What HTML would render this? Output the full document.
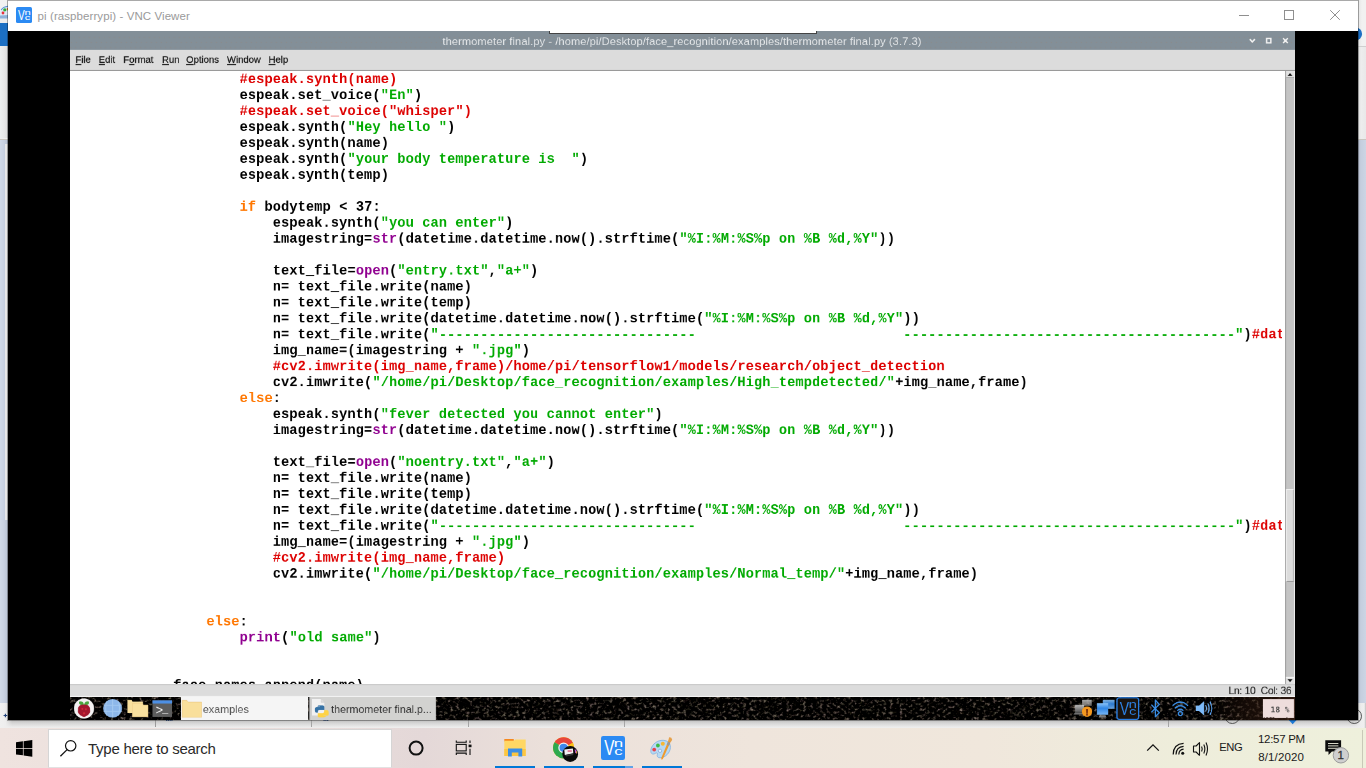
<!DOCTYPE html>
<html lang="en">
<head>
<meta charset="utf-8">
<title>pi (raspberrypi) - VNC Viewer</title>
<style>
*{box-sizing:border-box}
html,body{margin:0;padding:0;width:1366px;height:768px;overflow:hidden;background:#f0f0f0;font-family:"Liberation Sans",sans-serif}
#desk,#desk *,#vnc,#vnc *,#tb,#tb *,#band,#band *{position:absolute}
svg{overflow:visible}
#desk{left:0;top:0;width:1366px;height:728px;overflow:hidden;background:#efefef}
#band{left:0;top:720px;width:1366px;height:8px;background:linear-gradient(180deg,#bcbcbc 0,#d4d4d4 35%,#e6e6e6 75%,#efefef 100%)}
#vnc{left:8px;top:0;width:1350px;height:720px;background:#000;overflow:hidden;box-shadow:0 0 0 1px rgba(0,0,0,.32)}
#vtitle{left:0;top:0;width:1350px;height:31px;background:#fff;border-top:1px solid #a9a9a9}
#vtitle .t{left:29.6px;top:6.5px;font-size:11.5px;line-height:16px;color:#9a9a9a;white-space:nowrap;letter-spacing:.08px}
#remote{left:62px;top:31px;width:1225px;height:689px;background:#fff;overflow:hidden}
#ititle{left:0;top:0;width:1225px;height:19px;background-color:#838f98;background-image:radial-gradient(circle at 4.4px 6.5px,rgba(158,130,112,.55) 0,rgba(158,130,112,0) .9px),radial-gradient(circle at 1.4px 11.5px,rgba(158,130,112,.55) 0,rgba(158,130,112,0) .9px),radial-gradient(circle at .4px 16.5px,rgba(158,130,112,.5) 0,rgba(158,130,112,0) .9px);background-size:5px 19px}
#ititle .t{left:-.5px;width:1225px;top:4.3px;text-align:center;font-size:11px;line-height:13px;color:#e4e7e9;white-space:nowrap;letter-spacing:.12px}
#menu{left:0;top:0;width:1225px;height:21px;background:#dcdcdc;border-bottom:1px solid #8c8c8c}
#menu span{top:4.3px;font-size:9.5px;line-height:12px;color:#151515;white-space:nowrap;letter-spacing:0;-webkit-text-stroke:.18px #151515}
#menu u{position:static;text-decoration:underline;text-underline-offset:.8px;text-decoration-thickness:.8px}
#code{left:0;top:40px;width:1215px;height:613px;overflow:hidden;background:#fff}
#code pre{left:-1px;top:.9px;padding-left:.5px;margin:0;font-family:"Liberation Mono",monospace;font-weight:bold;font-size:21.333px;letter-spacing:.2046px;line-height:25px;color:#000;white-space:pre}
#cw{left:4px;top:0;width:1893.4px;height:1000px;overflow:hidden;transform-origin:0 0;transform:scale(.63802)}
#code pre{will-change:transform}
.n0{transform-origin:0 0;transform:scale(.63802)}
.n1{left:0;top:0;will-change:transform;overflow:hidden}
.n2{left:0;top:0;transform-origin:0 0;transform:scale(1.567349)}
#code pre span{position:static}
.c{color:#dd0000}.s{color:#00aa00}.k{color:#ff7700}.b{color:#900090}
#sb{left:0;top:0;width:10px;height:613px;background:#c4c4c4;border-left:1px solid #9f9f9f;border-right:1px solid #f2f2f2}
#status{left:0;top:0;width:1225px;height:13px;background:#dcdcdc;border-bottom:.7px solid #f2f2f2;border-top:.8px solid #c9c9c9}
#status .t{right:3.6px;top:.1px;font-size:10.3px;line-height:11px;color:#2a2a2a;white-space:pre;letter-spacing:-.27px;-webkit-text-stroke:.1px #2a2a2a}
#panel{left:0;top:0;width:1225px;height:23px;background:#0d0d0d;overflow:hidden}
#tb{left:0;top:728px;width:1366px;height:40px;overflow:hidden;background:linear-gradient(90deg,#efe3df 0,#e9dddb 20%,#e4d8d8 31%,#ebe0da 40%,#efe5dc 55%,#f0e7dc 72%,#eeeddb 86%,#eef0dc 100%)}
#search{left:48px;top:.5px;width:343.5px;height:39px;background:#fff;border:1px solid #d5d5d5;border-bottom-color:#e2e2e2}
#search .t{left:39px;top:10.5px;font-size:15px;line-height:17px;color:#2a2a2a;white-space:nowrap;letter-spacing:-.26px}
.ul{top:38px;height:2px;width:40px;background:#0078d7}
.tx{white-space:nowrap;color:#1a1a1a}
</style>
</head>
<body>
<div id="desk">
  <!-- window behind (paint), left strip -->
  <div style="left:0;top:0;width:8px;height:23px;background:#f2f2f2"></div>
  <svg style="left:0;top:0" width="8" height="24" viewBox="0 0 8 24">
    <path d="M1 10 Q3 6.5 8 6.2 L8 18.5 L0 18.5 L0 13 Z" fill="#dfe9f5"/>
    <path d="M1.2 10 Q3.2 6.8 8 6.3" fill="none" stroke="#5b92d6" stroke-width="1.1"/>
    <circle cx="4.8" cy="9.8" r="1.6" fill="#2fae3a"/>
    <circle cx="3" cy="13" r="1.4" fill="#e8323c"/>
    <rect x="6.8" y="8" width="1.2" height="2.4" fill="#d98a2c"/>
    <path d="M0 15.5 L8 15 L8 18.5 L0 18.5Z" fill="#8fb2d9"/>
  </svg>
  <div style="left:0;top:18.5px;width:8px;height:4.2px;background:#ececec"></div>
  <div style="left:0;top:22.7px;width:8px;height:23.2px;background:#1c6fc3"></div>
  <div style="left:0;top:45.9px;width:8px;height:92.6px;background:linear-gradient(90deg,#eef0f0,#e6e6e6 60%,#dadada)"></div>
  <div style="left:0;top:138.5px;width:8px;height:564px;background:linear-gradient(90deg,#d0d9e7 0,#c8d1e1 50%,#b9c2d2 100%);border-top:1px solid #c9c6c0"></div>
  <div style="left:5px;top:144px;width:3px;height:376px;background:linear-gradient(90deg,#e9e9ea,#e6e6e6 60%,#d4d4d4)"></div>
  <div style="left:0;top:702.5px;width:8px;height:26px;background:linear-gradient(90deg,#f1f1f1,#ececec 60%,#dcdcdc)"></div>
  <svg style="left:0;top:710px" width="8" height="10" viewBox="0 0 8 10"><path d="M3.6 5.5h3.6M5.4 3.8v3.4" stroke="#1d3f78" stroke-width="1.1" fill="none"/></svg>
  <!-- right strip -->
  <div style="left:1358px;top:0;width:8px;height:46px;background:linear-gradient(90deg,#e4e4e4,#f1f1f1 50%)"></div>
  <svg style="left:1348px;top:26px" width="18" height="16" viewBox="0 0 18 16"><circle cx="7.6" cy="7.9" r="6.5" fill="#1c6fc3"/></svg>
  <div style="left:1358px;top:46px;width:8px;height:1px;background:#cfcfcf"></div>
  <div style="left:1358px;top:47px;width:8px;height:91.5px;background:linear-gradient(90deg,#e0e0e0,#ededed 40%,#e9e9e9)"></div>
  <div style="left:1358px;top:138.5px;width:8px;height:564px;background:linear-gradient(90deg,#b3bbcb 0,#c5cede 35%,#ccd5e4 100%);border-top:1px solid #c9c6c0"></div>
  <div style="left:1358px;top:702.5px;width:8px;height:26px;background:linear-gradient(90deg,#dcdcdc,#ececec 40%,#f1f1f1)"></div>
</div>
<div id="band">
  <div style="left:0;top:0;width:12px;height:8px;background:linear-gradient(90deg,#f0f0f0 0,#eee 45%,rgba(238,238,238,0) 100%)"></div>
  <div style="left:1354px;top:0;width:12px;height:8px;background:linear-gradient(270deg,#f0f0f0 0,#eee 45%,rgba(238,238,238,0) 100%)"></div>
  <div style="left:155px;top:0;width:1px;height:7px;background:#9a9a9a"></div>
  <div style="left:311px;top:0;width:1px;height:7px;background:#a5a5a5"></div>
  <div style="left:467.5px;top:0;width:1px;height:7px;background:#a5a5a5"></div>
  <div style="left:623.5px;top:0;width:1px;height:7px;background:#a5a5a5"></div>
  <div style="left:1168px;top:0;width:1px;height:7px;background:#a5a5a5"></div>
</div>
<div id="band2" style="position:absolute;left:0;top:700px;width:1366px;height:28px;overflow:hidden">
  <svg style="position:absolute;left:0;top:0" width="1366" height="28" viewBox="0 700 1366 28">
    <circle cx="1232.3" cy="716.2" r="7.3" fill="none" stroke="#555" stroke-width="1"/>
    <circle cx="1354.2" cy="716.2" r="7.3" fill="none" stroke="#555" stroke-width="1"/>
    <path d="M1288.800 720 L1296.600 720 L1292.700 724.300 Z" fill="#1c78d4"/>
    <path d="M166 720.300h6.500" stroke="#1d3f78" stroke-width="1" stroke-dasharray="1.2 .6"/>
    <path d="M323.500 720.300h5" stroke="#1d3f78" stroke-width="1" stroke-dasharray="1.2 .6"/>
    <path d="M1365.300 703v25" stroke="#c4c4c4" stroke-width="1"/>
  </svg>
</div>
<div id="vnc">
  <div id="vtitle">
    <svg style="left:8px;top:6px" width="16" height="16" viewBox="0 0 16 16">
      <rect x="0" y="0" width="16" height="16" rx="1.6" fill="#2b8af3"/>
      <text x="2.1" y="12.5" font-size="14.1" font-family="Liberation Sans,sans-serif" fill="#fff" textLength="6.7" lengthAdjust="spacingAndGlyphs">V</text>
      <text x="8.5" y="7.6" font-size="7.7" font-family="Liberation Sans,sans-serif" fill="#fff" textLength="6.3" lengthAdjust="spacingAndGlyphs">n</text>
      <text x="8.8" y="12.7" font-size="7.9" font-family="Liberation Sans,sans-serif" fill="#fff" textLength="5.5" lengthAdjust="spacingAndGlyphs">c</text>
    </svg>
    <div class="t">pi (raspberrypi) - VNC Viewer</div>
    <svg style="left:1220px;top:0" width="130" height="30" viewBox="0 0 130 30">
      <path d="M11 14.5h10" stroke="#8f8f8f" stroke-width="1" fill="none"/>
      <rect x="56.5" y="9.5" width="9" height="9" fill="none" stroke="#8f8f8f" stroke-width="1"/>
      <path d="M102.2 9.2 L111.8 18.8 M111.8 9.2 L102.2 18.8" stroke="#8f8f8f" stroke-width="1" fill="none"/>
    </svg>
  </div>
  <div id="remote">
<div class="n0" style="left:0px;top:0px"><div class="n1" style="width:1921.0px;height:30.8px"><div class="n2">    <div id="ititle">
      <div class="t">thermometer final.py - /home/pi/Desktop/face_recognition/examples/thermometer final.py (3.7.3)</div>
      <svg style="left:1170px;top:0" width="55" height="19" viewBox="0 0 55 19">
        <path d="M9.8 8.2 L12.3 10.9 L14.8 8.2" fill="none" stroke="#f4f4f4" stroke-width="1.5"/>
        <rect x="26.6" y="7.5" width="4.3" height="4.3" fill="none" stroke="#f4f4f4" stroke-width="1.4"/>
        <path d="M43 7.2 L47.8 12.1 M47.8 7.2 L43 12.1" fill="none" stroke="#f4f4f4" stroke-width="1.5"/>
      </svg>
    </div></div></div></div>
<div class="n0" style="left:0px;top:19px"><div class="n1" style="width:1921.0px;height:33.9px"><div class="n2">        <div id="menu">
      <span style="left:5.5px"><u>F</u>ile</span>
      <span style="left:28.7px"><u>E</u>dit</span>
      <span style="left:53.3px">F<u>o</u>rmat</span>
      <span style="left:92px"><u>R</u>un</span>
      <span style="left:116.2px"><u>O</u>ptions</span>
      <span style="left:157px"><u>W</u>indow</span>
      <span style="left:198.6px"><u>H</u>elp</span>
    </div></div></div></div>
<div id="code"><div id="cw"><pre>
<span class="c">                    #espeak.synth(name)</span>
                    espeak.set_voice(<span class="s">"En"</span>)
<span class="c">                    #espeak.set_voice("whisper")</span>
                    espeak.synth(<span class="s">"Hey hello "</span>)
                    espeak.synth(name)
                    espeak.synth(<span class="s">"your body temperature is  "</span>)
                    espeak.synth(temp)

                    <span class="k">if</span> bodytemp &lt; 37:
                        espeak.synth(<span class="s">"you can enter"</span>)
                        imagestring=<span class="b">str</span>(datetime.datetime.now().strftime(<span class="s">"%I:%M:%S%p on %B %d,%Y"</span>))

                        text_file=<span class="b">open</span>(<span class="s">"entry.txt"</span>,<span class="s">"a+"</span>)
                        n= text_file.write(name)
                        n= text_file.write(temp)
                        n= text_file.write(datetime.datetime.now().strftime(<span class="s">"%I:%M:%S%p on %B %d,%Y"</span>))
                        n= text_file.write(<span class="s">"-------------------------------                         ----------------------------------------"</span>)<span class="c">#dat</span>
                        img_name=(imagestring + <span class="s">".jpg"</span>)
<span class="c">                        #cv2.imwrite(img_name,frame)/home/pi/tensorflow1/models/research/object_detection</span>
                        cv2.imwrite(<span class="s">"/home/pi/Desktop/face_recognition/examples/High_tempdetected/"</span>+img_name,frame)
                    <span class="k">else</span>:
                        espeak.synth(<span class="s">"fever detected you cannot enter"</span>)
                        imagestring=<span class="b">str</span>(datetime.datetime.now().strftime(<span class="s">"%I:%M:%S%p on %B %d,%Y"</span>))

                        text_file=<span class="b">open</span>(<span class="s">"noentry.txt"</span>,<span class="s">"a+"</span>)
                        n= text_file.write(name)
                        n= text_file.write(temp)
                        n= text_file.write(datetime.datetime.now().strftime(<span class="s">"%I:%M:%S%p on %B %d,%Y"</span>))
                        n= text_file.write(<span class="s">"-------------------------------                         ----------------------------------------"</span>)<span class="c">#dat</span>
                        img_name=(imagestring + <span class="s">".jpg"</span>)
<span class="c">                        #cv2.imwrite(img_name,frame)</span>
                        cv2.imwrite(<span class="s">"/home/pi/Desktop/face_recognition/examples/Normal_temp/"</span>+img_name,frame)


                <span class="k">else</span>:
                    <span class="b">print</span>(<span class="s">"old same"</span>)


            face_names.append(name)
</pre></div></div><div class="n0" style="left:1215px;top:40px"><div class="n1" style="width:16.7px;height:961.8px"><div class="n2">    <div id="sb">
      <div style="left:0;top:0;width:8px;height:6.5px;background:#e2e2e2;border-bottom:1px solid #a8a8a8"></div>
      <svg style="left:0;top:0" width="8" height="7" viewBox="0 0 8 7"><path d="M1.5 4.9 L4 2.1 L6.5 4.9 Z" fill="#111"/></svg>
      <div style="left:0;top:418px;width:8px;height:93px;background:#dcdcdc;border-top:1px solid #f6f6f6;border-left:1px solid #efefef;border-right:1px solid #b5b5b5;border-bottom:1px solid #8f8f8f"></div>
      <div style="left:0;top:606px;width:8px;height:7px;background:#e2e2e2;border-top:1px solid #f4f4f4"></div>
      <svg style="left:0;top:606px" width="8" height="7" viewBox="0 0 8 7"><path d="M1.5 2.2 L6.5 2.2 L4 5 Z" fill="#111"/></svg>
    </div></div></div></div>
<div class="n0" style="left:0px;top:653px"><div class="n1" style="width:1921.0px;height:21.4px"><div class="n2">    <div id="status"><div class="t">Ln: 10  Col: 36</div></div></div></div></div>
<div class="n0" style="left:0px;top:666px"><div class="n1" style="width:1921.0px;height:37.0px"><div class="n2">    <div id="panel">
      <svg style="left:0;top:0" width="1225" height="23" viewBox="0 0 1225 23">
        <defs>
          <filter id="nz" x="0" y="0" width="100%" height="100%" color-interpolation-filters="sRGB">
            <feTurbulence type="fractalNoise" baseFrequency="0.3 0.34" numOctaves="3" seed="11" result="n"/>
            <feColorMatrix in="n" type="matrix" values="1.5 0 0 0 -0.79  1.38 .06 0 0 -0.765  1.3 0 .06 0 -0.735  0 0 0 0 1"/>
          </filter>
          <linearGradient id="brn" x1="0" x2="1" y1="0" y2="0">
            <stop offset="0" stop-color="#2a170e" stop-opacity="0"/>
            <stop offset=".45" stop-color="#2a170e" stop-opacity=".5"/>
            <stop offset="1" stop-color="#3a2015" stop-opacity=".8"/>
          </linearGradient>
        </defs>
        <rect width="1225" height="23" fill="#070707"/>
        <rect width="1225" height="23" filter="url(#nz)"/>
        <rect x="1140" y="0" width="85" height="23" fill="url(#brn)"/>
      </svg>
      <svg style="left:0;top:0" width="1225" height="23" viewBox="0 0 1225 23">
        <!-- raspberry menu -->
        <circle cx="14" cy="11.5" r="10.1" fill="#f4f2f2"/>
        <path d="M9.200 6.800 Q8.200 3.800 10.800 4.300 Q13.400 4.500 14 7.800 Q11.400 8.800 9.200 6.800Z M18.800 6.800 Q19.800 3.800 17.200 4.300 Q14.600 4.500 14 7.800 Q16.600 8.800 18.800 6.800Z" fill="#4aa83e"/>
        <path d="M14 7.6 C17.800 7 20.400 9.700 19.900 12.900 C20.900 15.600 18.400 18.600 14 20 C9.600 18.600 7.100 15.600 8.100 12.900 C7.600 9.700 10.200 7 14 7.600Z" fill="#a3182e"/>
        <circle cx="12.300" cy="11.800" r="1" fill="#d02a3a"/><circle cx="15.800" cy="12.200" r="1.100" fill="#d02a3a"/><circle cx="14" cy="16.300" r="1.200" fill="#d02a3a"/>
        <!-- globe -->
        <circle cx="42.6" cy="11.3" r="9.3" fill="#8db7ea"/>
        <path d="M33.5 8.4h18.2M33.5 14.4h18.2M42.6 2v18.6M37 3.8q-2.6 7.5 0 15M48.2 3.8q2.6 7.5 0 15" stroke="#a9cdf3" stroke-width=".9" fill="none" opacity=".8"/>
        <!-- file manager -->
        <path d="M57.4 3.1h4.2l.9 1.6h10.4v11.2h-15.5z" fill="#f8df9c"/>
        <path d="M62.3 6.4h10.2l.9 1.6h4.5v11.8h-15.6z" fill="#f9e09e" stroke="#e9c27c" stroke-width=".4"/>
        <!-- terminal -->
        <rect x="82.5" y="3.4" width="19.6" height="16.4" fill="#5d5d5d"/>
        <rect x="82.5" y="3.4" width="19.6" height="3.2" fill="#4d8fe3"/>
        <text x="85.6" y="17.5" font-size="12.5" font-family="Liberation Mono,monospace" fill="#f2f2f2">&gt;</text><text x="92" y="15.4" font-size="10.5" font-weight="bold" font-family="Liberation Mono,monospace" fill="#f2f2f2">_</text>

      </svg>
      <!-- task buttons -->
      <div style="left:110.6px;top:0;width:127.1px;height:23px;background:#f5f5f5"></div>
      <div style="left:239px;top:0;width:126.8px;height:23px;background:#d2d2d0;border-left:1px solid #8a8a8a"></div>
      <svg style="left:110px;top:0" width="260" height="23" viewBox="0 0 260 23">
        <path d="M2.200 3.400h4.600l1.400 1.700h13.400v15.200h-19.400z" fill="#f9df9b" stroke="#ecc67f" stroke-width=".5"/>
        <!-- python file icon -->
        <path d="M131.5 1.6h9.5l3.6 3.6v13.6h-13.1z" fill="#f1f1f1" stroke="#c9c9c9" stroke-width=".5"/>
        <path d="M141 1.6v3.6h3.6" fill="#dcdcdc" stroke="#c0c0c0" stroke-width=".4"/>
        <path d="M138.4 8.4h4.2q1.7 0 1.7 1.7v2.6h-4.6q-1.7 0-1.7 1.8v1.2h-1.7q-1.4-.2-1.4-2.3v-1.6q0-1.6 1.6-1.6h3.6v-.5h-3z" fill="#3572a5"/>
        <path d="M143.7 20.4h-4.2q-1.7 0-1.7-1.7v-2.6h4.6q1.7 0 1.7-1.8v-1.2h2.7q1.9.2 1.9 2.3v1.6q0 1.6-1.6 1.6h-3.600v.5h3z" fill="#ffd343"/>
      </svg>
      <div class="tx" style="left:132.8px;top:5.800px;font-size:10.7px;line-height:13px;color:#555;letter-spacing:.05px">examples</div>
      <div class="tx" style="left:261.2px;top:5.800px;font-size:10.7px;line-height:13px;color:#333;letter-spacing:-.02px">thermometer final.p...</div>
      <svg style="left:930px;top:0" width="225" height="23" viewBox="0 0 225 23">
        <defs>
          <linearGradient id="gm" x1="0" x2="0" y1="0" y2="1"><stop offset="0" stop-color="#e8e8e8"/><stop offset="1" stop-color="#6f6f6f"/></linearGradient>
          <linearGradient id="bm" x1="0" x2="0" y1="0" y2="1"><stop offset="0" stop-color="#8cc4f8"/><stop offset=".45" stop-color="#2f86e6"/><stop offset="1" stop-color="#79b6f4"/></linearGradient>
        </defs>
        <!-- network (disconnected) -->
        <rect x="82" y="2.9" width="9.8" height="6" fill="url(#gm)" opacity=".75"/>
        <rect x="75" y="7.8" width="9" height="7.4" fill="url(#gm)" opacity=".8"/>
        <path d="M73.4 17.6h11.4l-1.6-2.2h-8.200z" fill="#8a8a8a" opacity=".8"/>
        <circle cx="87" cy="14.6" r="5.2" fill="#f3981f"/>
        <text x="87" y="18.2" font-size="9.6" font-weight="bold" font-family="Liberation Sans,sans-serif" fill="#5a1408" text-anchor="middle">!</text>
        <!-- displays -->
        <rect x="102.8" y="2.9" width="11.8" height="9" fill="url(#bm)" opacity=".9"/>
        <rect x="97" y="6.100" width="11.2" height="11.6" fill="url(#bm)"/>
        <path d="M98.600 20.600h8l-1.200-2.600h-5.600z" fill="#9a9a9a" opacity=".8"/>
        <!-- vnc -->
        <rect x="116.900" y="0.800" width="21.800" height="21.500" rx="2.200" fill="#19130f" stroke="#2a7de0" stroke-width="1.300"/>
        <text x="119.8" y="17.8" font-size="19.2" font-family="Liberation Sans,sans-serif" fill="#2f83e6" textLength="9.2" lengthAdjust="spacingAndGlyphs">V</text>
        <text x="128.5" y="11.15" font-size="10.5" font-family="Liberation Sans,sans-serif" fill="#2f83e6" textLength="8.5" lengthAdjust="spacingAndGlyphs">n</text>
        <text x="128.9" y="18.1" font-size="10.7" font-family="Liberation Sans,sans-serif" fill="#2f83e6" textLength="7.5" lengthAdjust="spacingAndGlyphs">c</text>
        <!-- bluetooth -->
        <path d="M151.300 7.700 L159.200 15.600 L155.300 19.800 V3 L159.200 7.400 L151.300 15.300" fill="none" stroke="#3a8fe8" stroke-width="1.300" stroke-linejoin="round"/>
        <!-- wifi -->
        <path d="M172.600 8.700 Q180.300 1.300 188 8.700" fill="none" stroke="#3d8fe6" stroke-width="1.300"/>
        <path d="M174.900 11.300 Q180.300 6 185.700 11.300" fill="none" stroke="#3d8fe6" stroke-width="1.300"/>
        <path d="M177.200 13.700 Q180.300 10.700 183.400 13.700" fill="none" stroke="#3d8fe6" stroke-width="1.300"/>
        <circle cx="180.300" cy="16.600" r="2" fill="none" stroke="#3d8fe6" stroke-width="1.300"/>
        <!-- volume -->
        <path d="M195.900 8.600h3.200l4.900-4.400v14.200l-4.900-4.400h-3.200z" fill="#7dbaf8"/>
        <path d="M205.600 8.200 Q207.200 11.300 205.600 14.400" fill="none" stroke="#7dbaf8" stroke-width="1.100"/>
        <path d="M207.800 6.400 Q210.400 11.300 207.800 16.200" fill="none" stroke="#6aaef5" stroke-width="1.100"/>
        <path d="M210 4.800 Q213.600 11.300 210 17.800" fill="none" stroke="#5aa2f0" stroke-width="1.100"/>
      </svg>
      <!-- cpu usage -->
      <div style="left:1193.2px;top:2px;width:31.200px;height:19px;background:#eedddc"></div>
      <div class="tx" style="left:1193.2px;top:5.600px;width:31.200px;text-align:center;font-family:'DejaVu Sans Mono','Liberation Mono',monospace;font-size:7.800px;font-weight:bold;line-height:10px;color:#484848;white-space:pre;text-indent:2.5px;margin-top:2.5px">18 %</div>
      <svg style="left:1193px;top:19px" width="32" height="3" viewBox="0 0 32 3"><path d="M0.500 3V1.600h1.500v.6h1.200v-.8h2v.5h1.600v-.7h1.700v.6h1.500v-.5h1.200v.7h1.600V3z M22.500 3v-.8h.9v-.9h1v1.700z" fill="#2b1a14"/></svg>
    </div></div></div></div>

  <div style="left:479px;top:0;width:267.5px;height:2.800px;background:#fff;border-bottom:1px solid #444;border-left:1px solid #444;border-right:1px solid #444"></div>
  </div>
</div>
<div id="tb">
  <!-- start -->
  <svg style="left:16px;top:12px" width="17" height="17" viewBox="0 0 17 17">
    <path d="M0 2.300 L6.900 1.350 V8 H0 Z M7.600 1.250 L16.300 0 V8 H7.600 Z M0 8.700 H6.900 V15.350 L0 14.400 Z M7.600 8.700 H16.300 V16.700 L7.600 15.450 Z" fill="#000"/>
  </svg>
  <div id="search">
    <svg style="left:10px;top:9px" width="20" height="20" viewBox="0 0 20 20">
      <circle cx="11.700" cy="6.800" r="5.200" fill="none" stroke="#111" stroke-width="1.200"/>
      <path d="M8.100 10.600 L1.400 17.300" stroke="#111" stroke-width="1.300" fill="none"/>
    </svg>
    <div class="t">Type here to search</div>
  </div>
  <!-- cortana -->
  <svg style="left:406px;top:10px" width="20" height="20" viewBox="0 0 20 20"><circle cx="10.100" cy="10.100" r="6.500" fill="none" stroke="#111" stroke-width="2"/></svg>
  <!-- task view -->
  <svg style="left:455px;top:12px" width="18" height="16" viewBox="0 0 18 16">
    <path d="M1.300 0.400 V2.200 H11.200 V0.400 M1.300 14.900 V13.100 H11.200 V14.900" fill="none" stroke="#111" stroke-width="1.100"/>
    <rect x="1.300" y="4.400" width="9.900" height="6.500" fill="none" stroke="#111" stroke-width="1.100"/>
    <path d="M15 0.400 V3 M15 8.700 V14.900" stroke="#111" stroke-width="1.100" fill="none"/>
    <rect x="13.600" y="4.600" width="2.900" height="2.600" fill="#111"/>
  </svg>
  <!-- explorer -->
  <svg style="left:500px;top:8px" width="30" height="24" viewBox="0 0 30 24">
    <path d="M4.300 3h9.500v2.600h-9.500z" fill="#f6891f"/>
    <path d="M4.300 4.800h9.600l1.200-1.200h10.600v16.400h-21.400z" fill="#ffd764"/>
    <path d="M4.300 13h21.400v7h-21.400z" fill="#fcc542"/>
    <path d="M8 12.600h14.200v7.900h-3.800v-4.100h-6.600v4.100h-3.800z" fill="#3b8ee6"/>
  </svg>
  <!-- chrome -->
  <svg style="left:550px;top:6px" width="32" height="32" viewBox="0 0 32 32">
    <defs><clipPath id="cc"><circle cx="13.600" cy="13.800" r="10.600"/></clipPath></defs>
    <g clip-path="url(#cc)">
      <rect x="0" y="0" width="32" height="32" fill="#fbc116"/>
      <path d="M13.600 13.800 L-2 4 L1 -3 L30 -3 L30 9 L22 9 Z" fill="#e8453c"/>
      <path d="M13.600 13.800 L3.500 7.500 L-4 8 L-4 30 L16 30 L19 24 Z" fill="#2da94f"/>
    </g>
    <circle cx="13.600" cy="13.800" r="5.300" fill="#f4f4f4"/>
    <circle cx="13.600" cy="13.800" r="4.100" fill="#3f87ee"/>
    <circle cx="20.200" cy="20" r="7.900" fill="#0a0a0a"/>
    <path d="M14.300 15.600 L22.900 14.500 L23.300 19.200 L14.800 21 Z" fill="#f3f0f3"/>
    <path d="M17.600 16.400h4.200v1.300h-4.200z" fill="#e2527a"/><path d="M15 21.300 L23.200 19.600 L23.400 21 L16 22.600Z" fill="#3a3a3a"/>
    <path d="M24.600 15.200l1.800 .8l.4 3.600l-1.600 -.6z" fill="#c25ad0"/>
    <path d="M26 17l.9.400l.2 2.200l-.8 -.4z" fill="#f5b021"/>
  </svg>
  <!-- vnc -->
  <svg style="left:601px;top:8px" width="24" height="24" viewBox="0 0 24 24">
    <rect x="0" y="0" width="24" height="24" rx="2.200" fill="#2b8af3"/>
    <text x="3.2" y="18.7" font-size="21.2" font-family="Liberation Sans,sans-serif" fill="#fff" textLength="10.1" lengthAdjust="spacingAndGlyphs">V</text>
    <text x="12.8" y="11.4" font-size="11.6" font-family="Liberation Sans,sans-serif" fill="#fff" textLength="9.4" lengthAdjust="spacingAndGlyphs">n</text>
    <text x="13.2" y="19.1" font-size="11.8" font-family="Liberation Sans,sans-serif" fill="#fff" textLength="8.3" lengthAdjust="spacingAndGlyphs">c</text>
  </svg>
  <!-- paint -->
  <svg style="left:648px;top:8px" width="28" height="26" viewBox="0 0 28 26">
    <path d="M13 4.400 C19 3.600 22.600 7 22.400 11.400 C22.200 16.600 17.600 21.600 12 21.800 C9.400 21.800 8.800 20 9.400 18.400 C9.900 17 8.800 16.400 7.200 17.400 C4.600 19 2.600 17.600 2.800 14.600 C3.200 9.600 7.600 5.200 13 4.400 Z" fill="#b7d8f3" stroke="#7fb1e0" stroke-width=".8"/>
    <circle cx="6.200" cy="13.600" r="1.900" fill="#e5434b"/>
    <circle cx="9.900" cy="9.500" r="1.900" fill="#3dbb46"/>
    <circle cx="14.800" cy="7.800" r="2" fill="#f7b733"/>
    <circle cx="12" cy="14.800" r="1.700" fill="#e9f2fb" stroke="#86acd8" stroke-width=".8"/>
    <path d="M20.900 3.600 L23.200 4.600 L14.700 23.200 L13.200 23.600 L13.300 22 Z" fill="#f09a2c"/>
    <path d="M20 5.700 L22.400 6.800 L21 9.800 L18.700 8.700 Z" fill="#9a9a9a"/>
    <path d="M21 1.400 Q23.600 1 24.200 3.800 L22.800 6 L20.400 5 Z" fill="#e6a14a"/>
  </svg>
  <div class="ul" style="left:495px"></div>
  <div class="ul" style="left:544px"></div>
  <div class="ul" style="left:593px;width:32px"></div><div class="ul" style="left:625px;width:8px;background:#5ea3e8"></div>
  <div class="ul" style="left:642px"></div>
  <!-- tray -->
  <svg style="left:1140px;top:8px" width="80" height="24" viewBox="0 0 80 24">
    <path d="M7.200 14.600 L13 8.900 L18.800 14.600" fill="none" stroke="#111" stroke-width="1.300"/>
    <path d="M33.200 18.400 Q33.400 8 43.600 7.400" fill="none" stroke="#111" stroke-width="1.200"/>
    <path d="M36 18.400 Q36.200 10.800 43.600 10.300" fill="none" stroke="#111" stroke-width="1.200"/>
    <path d="M38.800 18.400 Q39 13.600 43.600 13.200" fill="none" stroke="#111" stroke-width="1.200"/>
    <circle cx="42.700" cy="17.300" r="1.500" fill="#111"/>
    <path d="M53.500 10h2.600l3.400-3.300v12.600l-3.400-3.300h-2.600z" fill="none" stroke="#111" stroke-width="1.100" stroke-linejoin="round"/>
    <path d="M61.600 10.400 Q62.900 13 61.600 15.600 M63.800 8.400 Q65.900 13 63.800 17.600 M66 6.500 Q69 13 66 19.500" fill="none" stroke="#111" stroke-width="1.100"/>
  </svg>
  <div class="tx" style="left:1219.300px;top:13.400px;font-size:11.2px;line-height:13px;letter-spacing:-.45px">ENG</div>
  <div class="tx" style="left:1258px;top:4.600px;font-size:11.500px;line-height:13px;letter-spacing:-.3px">12:57 PM</div>
  <div class="tx" style="left:1258.200px;top:22.500px;font-size:11.500px;line-height:13px;letter-spacing:.13px">8/1/2020</div>
  <svg style="left:1320px;top:8px" width="32" height="28" viewBox="0 0 32 28">
    <path d="M5.300 4.200h15.800v11.400h-9.200l-3.400 3.400v-3.400h-3.200z" fill="#0c0c0c"/>
    <path d="M8 7.500h10.400M8 9.900h10.400M8 12.300h10.400" stroke="#eeeedd" stroke-width=".9"/>
    <circle cx="20.900" cy="19.300" r="7.700" fill="#cfcfcf" stroke="#9c9c9c" stroke-width="1"/>
  </svg>
  <div class="tx" style="left:1337.600px;top:20.600px;font-size:11.5px;line-height:13px;color:#333;-webkit-text-stroke:.3px #333">1</div>
  <div style="left:1361.500px;top:2px;width:1px;height:38px;background:#c9c9b8"></div>
</div>
</body>
</html>
